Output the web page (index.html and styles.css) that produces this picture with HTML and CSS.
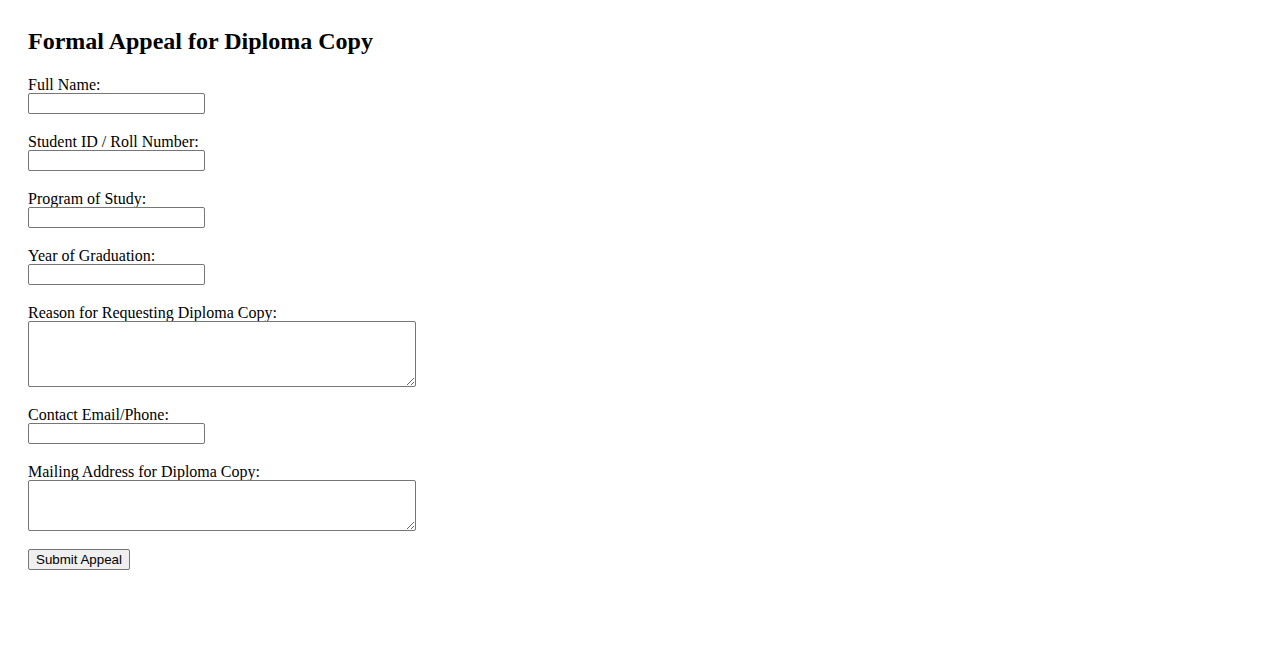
FILE: index.html
```html
<!DOCTYPE html>
<html lang="en">
<head>
<meta charset="utf-8">
<title>Formal Appeal for Diploma Copy</title>
<link rel="stylesheet" href="styles.css">
</head>
<body>
<div class="page">
  <h2 class="title">Formal Appeal for Diploma Copy</h2>
  <form class="form">
    <div class="group">
      <label class="label" for="name">Full Name:</label>
      <input class="field" id="name" type="text">
    </div>
    <div class="group">
      <label class="label" for="sid">Student ID / Roll Number:</label>
      <input class="field" id="sid" type="text">
    </div>
    <div class="group">
      <label class="label" for="prog">Program of Study:</label>
      <input class="field" id="prog" type="text">
    </div>
    <div class="group">
      <label class="label" for="year">Year of Graduation:</label>
      <input class="field" id="year" type="text">
    </div>
    <div class="group">
      <label class="label" for="reason">Reason for Requesting Diploma Copy:</label>
      <textarea class="area area-tall" id="reason"></textarea>
    </div>
    <div class="group">
      <label class="label" for="contact">Contact Email/Phone:</label>
      <input class="field" id="contact" type="text">
    </div>
    <div class="group group-last">
      <label class="label" for="addr">Mailing Address for Diploma Copy:</label>
      <textarea class="area area-short" id="addr"></textarea>
    </div>
    <button class="submit" type="submit">Submit Appeal</button>
  </form>
</div>
</body>
</html>
```

FILE: styles.css
```css
html, body {
  background: #ffffff;
}
body {
  margin: 8px;
  font-family: "Liberation Serif", "Times New Roman", serif;
  font-size: 16px;
  color: #000000;
}
.page {
  padding: 20px;
}
.title {
  margin: 0 0 22.5px 0;
  font-size: 24px;
  font-weight: bold;
  line-height: 27.6px;
}
.form {
  display: flex;
  flex-direction: column;
  align-items: flex-start;
}
.group {
  display: flex;
  flex-direction: column;
  align-items: flex-start;
  margin-bottom: 21.6px;
}
.group-last {
  margin-bottom: 18px;
}
.label {
  display: block;
  line-height: 14.4px;
}
.field {
  box-sizing: border-box;
  width: 177px;
  height: 21px;
  margin: 0;
  padding: 1px 2px;
  border: 1px solid #767676;
  border-radius: 2px;
  background: #ffffff;
  font-family: "Liberation Sans", Arial, sans-serif;
  font-size: 13.33px;
}
.area {
  box-sizing: border-box;
  width: 388px;
  margin: 0;
  padding: 2px;
  border: 1px solid #767676;
  border-radius: 2px;
  background: #ffffff;
  font-family: "Liberation Mono", monospace;
  font-size: 13.33px;
}
.area-tall {
  height: 66px;
}
.area-short {
  height: 51px;
}
.submit {
  box-sizing: border-box;
  height: 21px;
  margin: 0;
  padding: 1px 7px;
  border: 1px solid #767676;
  border-radius: 2px;
  background: #efefef;
  color: #000000;
  font-family: "Liberation Sans", Arial, sans-serif;
  font-size: 13.33px;
  line-height: 17px;
}
```
